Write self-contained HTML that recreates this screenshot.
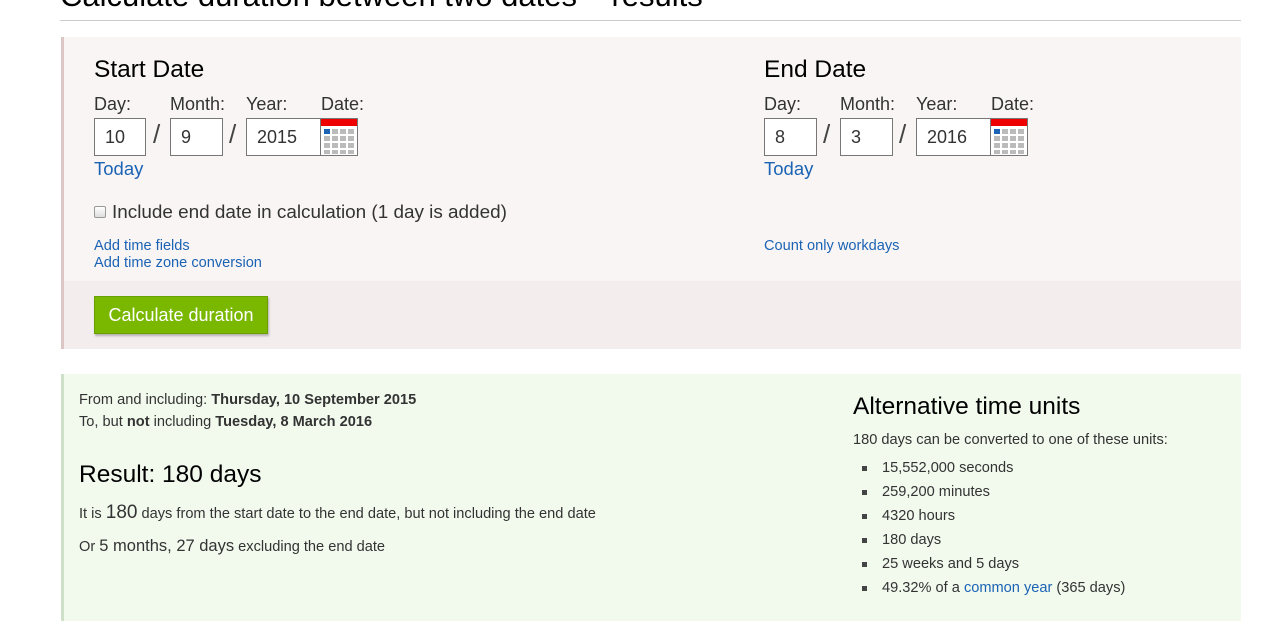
<!DOCTYPE html>
<html><head><meta charset="utf-8"><style>
*{margin:0;padding:0;box-sizing:border-box}
body{width:1286px;height:638px;overflow:hidden;background:#fff;font-family:"Liberation Sans",Arial,sans-serif;color:#333;position:relative}
.a{position:absolute;white-space:nowrap}
h1{position:absolute;left:60px;top:-20px;font-size:31px;line-height:31px;font-weight:normal;color:#000}
.hr{position:absolute;left:60px;top:20px;width:1181px;height:1px;background:#ccc}
.form{position:absolute;left:61px;top:37px;width:1180px;height:312px;background:#f9f5f4;border-left:3px solid #dcc6c6}
.form .low{position:absolute;left:0;top:244px;width:100%;height:68px;background:#f3eded}
.h2{font-size:24.5px;line-height:24px;color:#000}
.lbl{font-size:18px;line-height:18px;color:#333}
.inp{position:absolute;height:38px;border:1px solid #777;background:#fff;font-size:18px;line-height:36px;padding-left:10px;color:#333}
.sl{font-size:26px;line-height:26px;color:#444}
.s{font-size:14.6px;line-height:14px;color:#333}
.lk,.s.lk{color:#1a63b5;text-decoration:none}
.cal{position:absolute;width:38px;height:38px;border:1px solid #777;background:#fff}
.btn{position:absolute;left:94px;top:296px;width:174px;height:38px;background:#7ab800;border:1px solid #6a9f00;color:#fff;font-size:18px;line-height:36px;text-align:center;box-shadow:1px 2px 2px rgba(0,0,0,.25)}
.res{position:absolute;left:61px;top:374px;width:1180px;height:247px;background:#f2faee;border-left:3px solid #cfe0c8}
ul{list-style:none}
li{position:absolute;left:882px;font-size:14.6px;line-height:14px;color:#333;white-space:nowrap}
li:before{content:"";position:absolute;left:-20px;top:5px;width:5px;height:5px;background:#444}
</style></head><body>
<h1>Calculate duration between two dates – results</h1>
<div class="hr"></div>
<div class="form"><div class="low"></div></div>

<div class="a h2" style="left:94px;top:58px">Start Date</div>
<div class="a lbl" style="left:94px;top:95px">Day:</div>
<div class="a lbl" style="left:170px;top:95px">Month:</div>
<div class="a lbl" style="left:246px;top:95px">Year:</div>
<div class="a lbl" style="left:321px;top:95px">Date:</div>
<div class="inp" style="left:94px;top:118px;width:52px">10</div>
<div class="a sl" style="left:153px;top:121px">/</div>
<div class="inp" style="left:170px;top:118px;width:53px">9</div>
<div class="a sl" style="left:229px;top:121px">/</div>
<div class="inp" style="left:246px;top:118px;width:75px">2015</div>
<div class="cal" style="left:320px;top:118px"><svg width="36" height="36" viewBox="0 0 36 36"><rect x="0" y="0" width="36" height="7" fill="#e00"/><g fill="#bbb"><rect x="3" y="10" width="6" height="5" fill="#1a63b5"/><rect x="11" y="10" width="6" height="5"/><rect x="19" y="10" width="6" height="5"/><rect x="27" y="10" width="6" height="5"/><rect x="3" y="17" width="6" height="5"/><rect x="11" y="17" width="6" height="5"/><rect x="19" y="17" width="6" height="5"/><rect x="27" y="17" width="6" height="5"/><rect x="3" y="24" width="6" height="5"/><rect x="11" y="24" width="6" height="5"/><rect x="19" y="24" width="6" height="5"/><rect x="27" y="24" width="6" height="5"/><rect x="3" y="31" width="6" height="4"/><rect x="11" y="31" width="6" height="4"/><rect x="19" y="31" width="6" height="4"/><rect x="27" y="31" width="6" height="4"/></g></svg></div>
<div class="a lbl lk" style="left:94px;top:160px;font-size:18.5px">Today</div>

<div class="a h2" style="left:764px;top:58px">End Date</div>
<div class="a lbl" style="left:764px;top:95px">Day:</div>
<div class="a lbl" style="left:840px;top:95px">Month:</div>
<div class="a lbl" style="left:916px;top:95px">Year:</div>
<div class="a lbl" style="left:991px;top:95px">Date:</div>
<div class="inp" style="left:764px;top:118px;width:53px">8</div>
<div class="a sl" style="left:823px;top:121px">/</div>
<div class="inp" style="left:840px;top:118px;width:53px">3</div>
<div class="a sl" style="left:899px;top:121px">/</div>
<div class="inp" style="left:916px;top:118px;width:75px">2016</div>
<div class="cal" style="left:990px;top:118px"><svg width="36" height="36" viewBox="0 0 36 36"><rect x="0" y="0" width="36" height="7" fill="#e00"/><g fill="#bbb"><rect x="3" y="10" width="6" height="5" fill="#1a63b5"/><rect x="11" y="10" width="6" height="5"/><rect x="19" y="10" width="6" height="5"/><rect x="27" y="10" width="6" height="5"/><rect x="3" y="17" width="6" height="5"/><rect x="11" y="17" width="6" height="5"/><rect x="19" y="17" width="6" height="5"/><rect x="27" y="17" width="6" height="5"/><rect x="3" y="24" width="6" height="5"/><rect x="11" y="24" width="6" height="5"/><rect x="19" y="24" width="6" height="5"/><rect x="27" y="24" width="6" height="5"/><rect x="3" y="31" width="6" height="4"/><rect x="11" y="31" width="6" height="4"/><rect x="19" y="31" width="6" height="4"/><rect x="27" y="31" width="6" height="4"/></g></svg></div>
<div class="a lbl lk" style="left:764px;top:160px;font-size:18.5px">Today</div>

<div class="a" style="left:94px;top:206px;width:12px;height:12px;border:1px solid #999;border-radius:2px;background:linear-gradient(#fff,#ddd)"></div>
<div class="a lbl" style="left:112px;top:204px;font-size:18.9px">Include end date in calculation (1 day is added)</div>
<div class="a s lk" style="left:94px;top:239px">Add time fields</div>
<div class="a s lk" style="left:94px;top:256px">Add time zone conversion</div>
<div class="a s lk" style="left:764px;top:239px">Count only workdays</div>
<div class="btn">Calculate duration</div>

<div class="res"></div>
<div class="a s" style="left:79px;top:393px">From and including: <b>Thursday, 10 September 2015</b></div>
<div class="a s" style="left:79px;top:415px">To, but <b>not</b> including <b>Tuesday, 8 March 2016</b></div>
<div class="a h2" style="left:79px;top:463px">Result: 180 days</div>
<div class="a s" style="left:79px;top:504px;line-height:18px">It is <span style="font-size:19px">180</span> days from the start date to the end date, but not including the end date</div>
<div class="a s" style="left:79px;top:537px;line-height:18px">Or <span style="font-size:16.5px">5 months, 27 days</span> excluding the end date</div>

<div class="a h2" style="left:853px;top:395px">Alternative time units</div>
<div class="a s" style="left:853px;top:433px">180 days can be converted to one of these units:</div>
<ul>
<li style="top:461px">15,552,000 seconds</li>
<li style="top:485px">259,200 minutes</li>
<li style="top:509px">4320 hours</li>
<li style="top:533px">180 days</li>
<li style="top:557px">25 weeks and 5 days</li>
<li style="top:581px">49.32% of a <span class="lk">common year</span> (365 days)</li>
</ul>
</body></html>
